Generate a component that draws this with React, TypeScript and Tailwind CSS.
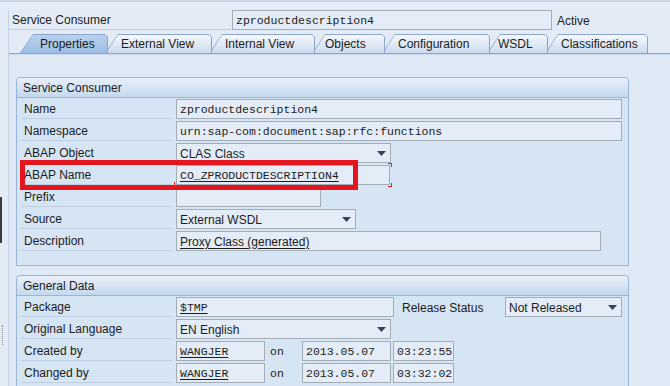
import React from 'react';

const SANS = "font-['Liberation_Sans',Arial,sans-serif]";
const MONO = "font-['Liberation_Mono','Courier_New',monospace]";

function Arrow() {
  return (
    <svg width="9" height="5" viewBox="0 0 9 5" className="shrink-0 mr-[4px]">
      <path d="M0 0H9L4.5 5Z" fill="#34445f" />
    </svg>
  );
}

function Box({
  className = '',
  children,
  mono = false,
  dropdown = false,
}: {
  className?: string;
  children?: React.ReactNode;
  mono?: boolean;
  dropdown?: boolean;
}) {
  return (
    <div
      className={`relative h-[20px] flex items-center shrink-0 border border-[#a4acb6] bg-[#e4edf7] pl-[3px] ${className}`}
    >
      <div
        className={`flex-1 truncate leading-[18px] pt-[1px] ${mono ? `${MONO} text-[11.5px]` : `${SANS} text-[12px]`}`}
      >
        {children}
      </div>
      {dropdown && <Arrow />}
    </div>
  );
}

function Row({ label, children }: { label: string; children?: React.ReactNode }) {
  return (
    <div className="flex items-center h-[20px] gap-[4px]">
      <div className="w-[150px] h-[20px] shrink-0 border-b border-[#bfcee0] pl-[2px] pt-[1px] leading-[19px] text-[12px]">
        {label}
      </div>
      {children}
    </div>
  );
}

function PanelHeader({ title }: { title: string }) {
  return (
    <div className="h-[20px] rounded-t-[4px] bg-gradient-to-b from-[#e9f0f9] to-[#c4d8ee] border-b border-[#9bb5d5] pl-[6px] pt-[1px] leading-[19px] text-[12px]">
      {title}
    </div>
  );
}

const tabs = [
  { t: 'Properties', w: 88, pl: 20, active: true },
  { t: 'External View', w: 107, pl: 16 },
  { t: 'Internal View', w: 106, pl: 16 },
  { t: 'Objects', w: 73, pl: 13 },
  { t: 'Configuration', w: 108, pl: 16 },
  { t: 'WSDL', w: 61, pl: 11 },
  { t: 'Classifications', w: 103, pl: 16 },
];

function Tabs() {
  return (
    <div className="flex h-[19px] ml-[11px]">
      {tabs.map((tab, i) => (
        <div
          key={tab.t}
          className={`relative h-[19px] shrink-0 ${i > 0 ? '-ml-[3px]' : ''}`}
          style={{ width: tab.w, zIndex: tab.active ? 20 : 10 - i }}
        >
          <div className="absolute inset-0 bg-[#8ba6c9] [clip-path:polygon(0_100%,13px_0,calc(100%-3px)_0,100%_3px,100%_100%)]" />
          <div
            className={`absolute left-[1px] right-[1px] top-[1px] bottom-0 [clip-path:polygon(0_100%,12px_0,calc(100%-2px)_0,100%_2px,100%_100%)] ${
              tab.active
                ? 'bg-gradient-to-b from-[#bad1ef] to-[#9dbde4]'
                : 'bg-gradient-to-b from-[#f5f8fc] to-[#cbdbee]'
            }`}
          />
          <div
            className="relative leading-[19px] pt-[1px] text-[12px] whitespace-nowrap"
            style={{ paddingLeft: tab.pl }}
          >
            {tab.t}
          </div>
        </div>
      ))}
    </div>
  );
}

export default function App() {
  return (
    <div className={`relative w-[670px] h-[386px] overflow-hidden bg-[#e3ecf6] text-[#1c1c1c] ${SANS}`}>
      <div className="h-[2px] bg-[#cbd8e8]" />
      <div className="ml-[8px] border-l border-[#c4d2e3] h-[384px]">
        {/* header row */}
        <div className="flex items-center h-[20px] mt-[8px]">
          <div className="w-[222px] h-[20px] border-b border-[#c2cfdf] pl-[3px] pt-[1px] leading-[19px] text-[12px]">
            Service Consumer
          </div>
          <Box mono className="w-[320px] ml-[1px]">zproductdescription4</Box>
          <div className="ml-[5px] text-[12px] leading-[20px] pt-[1px]">Active</div>
        </div>

        {/* tabs */}
        <div className="mt-[4px]">
          <Tabs />
        </div>
        <div className="h-[2px] bg-[#87a7cf] border-b border-[#c9dbef]" />

        {/* content */}
        <div className="pt-[22px] bg-[#dfe9f5] h-[331px]">
          {/* Panel 1 */}
          <div className="ml-[7px] w-[613px] border border-[#9bb5d5] rounded-t-[4px] bg-[#d6e5f4]">
            <PanelHeader title="Service Consumer" />
            <div className="pl-[5px] pt-[1px] pb-[14px] flex flex-col gap-[2px]">
              <Row label="Name">
                <Box mono className="w-[446px]">zproductdescription4</Box>
              </Row>
              <Row label="Namespace">
                <Box mono className="w-[446px]">urn:sap-com:document:sap:rfc:functions</Box>
              </Row>
              <Row label="ABAP Object">
                <Box dropdown className="w-[215px]">CLAS Class</Box>
              </Row>
              <Row label="ABAP Name">
                <div className="relative">
                  <Box mono className="w-[214px]">
                    <span className="underline underline-offset-2">CO_ZPRODUCTDESCRIPTION4</span>
                  </Box>
                  <div className="absolute -right-[2px] -top-[2px] w-[4px] h-[4px] border-t border-r border-[#e02020]" />
                  <div className="absolute -right-[2px] -bottom-[2px] w-[4px] h-[4px] border-b border-r border-[#e02020]" />
                  <div className="absolute -left-[2px] -bottom-[2px] w-[4px] h-[5px] border-b border-l border-[#e02020]" />
                </div>
              </Row>
              <Row label="Prefix">
                <Box mono className="w-[145px]" />
              </Row>
              <Row label="Source">
                <Box dropdown className="w-[180px]">External WSDL</Box>
              </Row>
              <Row label="Description">
                <Box className="w-[425px]">
                  <span className="underline underline-offset-2">Proxy Class (generated)</span>
                </Box>
              </Row>
            </div>
          </div>

          {/* Panel 2 */}
          <div className="mt-[9px] ml-[7px] w-[613px] h-[120px] border border-[#9bb5d5] rounded-t-[4px] bg-[#d6e5f4]">
            <PanelHeader title="General Data" />
            <div className="pl-[5px] pt-[1px] flex flex-col gap-[2px]">
              <Row label="Package">
                <Box mono className="w-[218px]">
                  <span className="underline underline-offset-2">$TMP</span>
                </Box>
                <div className="ml-[4px] w-[99px] text-[12px] leading-[20px] pt-[1px]">Release Status</div>
                <Box dropdown className="w-[117px]">Not Released</Box>
              </Row>
              <Row label="Original Language">
                <Box dropdown className="w-[215px]">EN English</Box>
              </Row>
              <Row label="Created by">
                <Box mono className="w-[89px]">
                  <span className="underline underline-offset-2">WANGJER</span>
                </Box>
                <div className={`w-[29px] pl-[1px] pt-[1px] ${MONO} text-[11.5px] leading-[20px]`}>on</div>
                <Box mono className="w-[89px]">2013.05.07</Box>
                <Box mono className="w-[61px] -ml-[2px]">03:23:55</Box>
              </Row>
              <Row label="Changed by">
                <Box mono className="w-[89px]">
                  <span className="underline underline-offset-2">WANGJER</span>
                </Box>
                <div className={`w-[29px] pl-[1px] pt-[1px] ${MONO} text-[11.5px] leading-[20px]`}>on</div>
                <Box mono className="w-[89px]">2013.05.07</Box>
                <Box mono className="w-[61px] -ml-[2px]">03:32:02</Box>
              </Row>
            </div>
          </div>
        </div>
      </div>

      {/* left edge marks */}
      <div className="absolute left-0 top-[197px] w-[2px] h-[46px] bg-[#3a3a3a]" />
      <div className="absolute left-[2px] top-[325px] w-[1px] h-[20px] border-l border-dotted border-[#8a8a8a]" />

      {/* red highlight box */}
      <div className="absolute left-[20px] top-[160px] w-[338px] h-[30px] border-[5px] border-[#e3161f]" />
    </div>
  );
}
